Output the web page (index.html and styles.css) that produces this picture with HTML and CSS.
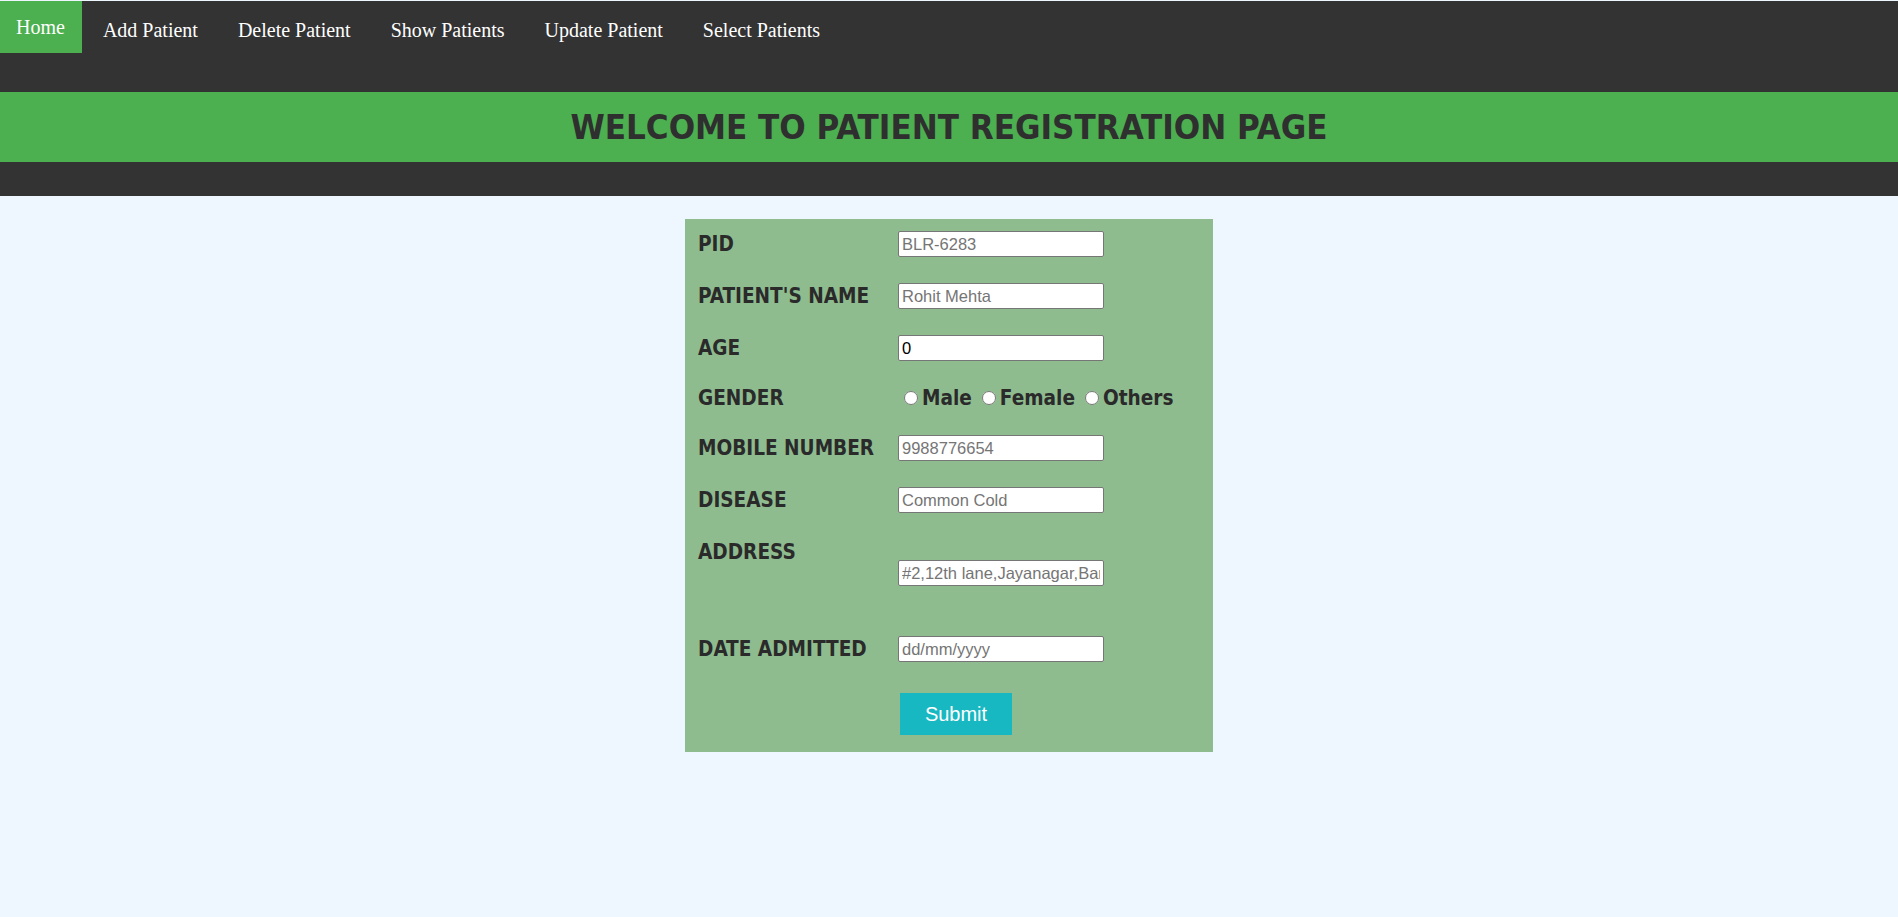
FILE: index.html
```html
<!DOCTYPE html>
<html lang="en">
<head>
<meta charset="utf-8">
<title>Patient Registration</title>
<link rel="stylesheet" href="styles.css">
</head>
<body>
<div class="page">
  <header class="top">
    <nav class="nav">
      <a class="nav-link active" href="#">Home</a>
      <a class="nav-link" href="#">Add Patient</a>
      <a class="nav-link" href="#">Delete Patient</a>
      <a class="nav-link" href="#">Show Patients</a>
      <a class="nav-link" href="#">Update Patient</a>
      <a class="nav-link" href="#">Select Patients</a>
    </nav>
    <div class="banner">
      <h1 class="banner-title">WELCOME TO PATIENT REGISTRATION PAGE</h1>
    </div>
  </header>

  <main class="main">
    <form class="reg-form">
      <div class="row">
        <label class="lbl">PID</label>
        <input class="field" type="text" placeholder="BLR-6283">
      </div>
      <div class="row">
        <label class="lbl">PATIENT'S NAME</label>
        <input class="field" type="text" placeholder="Rohit Mehta">
      </div>
      <div class="row">
        <label class="lbl">AGE</label>
        <input class="field" type="number" value="0">
      </div>
      <div class="row row-gender">
        <label class="lbl">GENDER</label>
        <div class="radios">
          <input class="radio" type="radio" name="g"><span class="opt">Male</span>
          <input class="radio" type="radio" name="g"><span class="opt">Female</span>
          <input class="radio" type="radio" name="g"><span class="opt">Others</span>
        </div>
      </div>
      <div class="row">
        <label class="lbl">MOBILE NUMBER</label>
        <input class="field" type="text" placeholder="9988776654">
      </div>
      <div class="row">
        <label class="lbl">DISEASE</label>
        <input class="field" type="text" placeholder="Common Cold">
      </div>
      <div class="row row-address">
        <label class="lbl">ADDRESS</label>
        <input class="field" type="text" placeholder="#2,12th lane,Jayanagar,Bangalore">
      </div>
      <div class="row row-date">
        <label class="lbl">DATE ADMITTED</label>
        <input class="field" type="text" placeholder="dd/mm/yyyy">
      </div>
      <div class="row row-submit">
        <span class="lbl"></span>
        <button class="submit" type="button">Submit</button>
      </div>
    </form>
  </main>
</div>
</body>
</html>
```

FILE: styles.css
```css
html, body {
  margin: 0;
  padding: 0;
  background: #eef7ff;
}

.page {
  padding-top: 1px;
  min-height: 916px;
}

.top {
  background: #333333;
  padding-bottom: 34px;
}

.nav {
  display: flex;
  height: 52px;
  margin-bottom: 39px;
}

.nav-link {
  display: flex;
  align-items: center;
  padding: 6px 20px 0 20px;
  color: #ffffff;
  text-decoration: none;
  font-family: "Liberation Serif", "Times New Roman", serif;
  font-size: 20px;
  white-space: nowrap;
}

.nav-link.active {
  background: #4caf50;
  padding: 0 17px 0 16px;
  margin-right: 1px;
}

.banner {
  background: #4caf50;
  height: 70px;
  display: flex;
  align-items: center;
  justify-content: center;
}

.banner-title {
  margin: 0;
  color: #2f2f2f;
  font-family: "DejaVu Sans Condensed", "DejaVu Sans", Tahoma, sans-serif;
  font-stretch: condensed;
  font-weight: bold;
  font-size: 34.6px;
  line-height: 1;
}

.main {
  padding-top: 23px;
}

.reg-form {
  width: 528px;
  box-sizing: border-box;
  margin: 0 auto;
  background: #8fbc8f;
  padding: 12px 13px 17px 13px;
  display: flex;
  flex-direction: column;
}

.row {
  display: flex;
  align-items: center;
  height: 26px;
  margin-bottom: 26px;
}

.lbl {
  width: 200px;
  flex: none;
  color: #2a2a2a;
  font-family: "DejaVu Sans Condensed", "DejaVu Sans", Tahoma, sans-serif;
  font-stretch: condensed;
  font-weight: bold;
  font-size: 20.6px;
  line-height: 26px;
}

.field {
  box-sizing: border-box;
  width: 206px;
  height: 26px;
  margin: 0;
  padding: 0 3px;
  border: 1px solid #767676;
  border-radius: 2px;
  background: #ffffff;
  color: #000000;
  font-family: "Liberation Sans", Arial, sans-serif;
  font-size: 16.5px;
  outline: none;
}

.field::placeholder {
  color: #757575;
}

.field::-webkit-inner-spin-button,
.field::-webkit-outer-spin-button {
  -webkit-appearance: none;
  margin: 0;
}

.row-gender {
  height: 22px;
}

.radios {
  display: flex;
  align-items: center;
}

.radio {
  width: 14px;
  height: 14px;
  margin: 0 4px 0 6px;
}

.opt {
  color: #2a2a2a;
  font-family: "DejaVu Sans Condensed", "DejaVu Sans", Tahoma, sans-serif;
  font-stretch: condensed;
  font-weight: bold;
  font-size: 20.6px;
  margin-right: 4px;
}

.row-address {
  align-items: flex-start;
  height: 47px;
  margin-bottom: 50px;
}

.row-address .field {
  margin-top: 21px;
}

.row-date {
  margin-bottom: 30px;
}

.row-submit {
  height: 42px;
  margin-bottom: 0;
  margin-top: 1px;
}

.submit {
  width: 112px;
  height: 42px;
  margin-left: 2px;
  border: none;
  background: #17b8c2;
  color: #ffffff;
  font-family: "Liberation Sans", Arial, sans-serif;
  font-size: 20px;
  padding: 0;
}
```
